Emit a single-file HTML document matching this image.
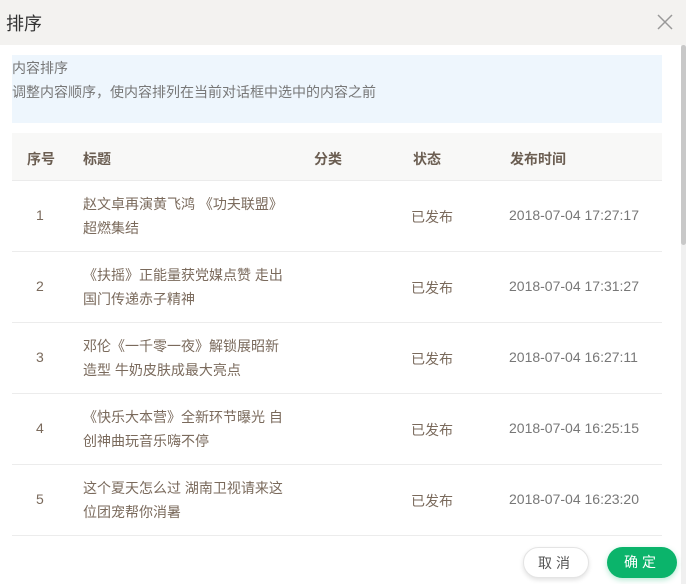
<!DOCTYPE html><html><head><meta charset="utf-8"><style>
*{margin:0;padding:0;box-sizing:border-box}
body{width:686px;height:584px;background:#fff;font-family:"Liberation Sans","Noto Sans CJK SC",sans-serif;color:#666;position:relative;overflow:hidden}
.hd{position:absolute;left:0;top:0;width:686px;height:45px;background:#f3f2f0}
.hd .t{position:absolute;left:6px;top:10px;font-size:18px;color:#333}
.x{position:absolute;left:657px;top:14px}
.sb{position:absolute;left:681px;top:45px;width:5px;height:539px;background:#f0f0f0}
.sb i{position:absolute;left:0;top:0;width:5px;height:200px;background:#c8c8c8;border-radius:3px}
.info{position:absolute;left:12px;top:55px;width:650px;height:68px;background:#eef6fd;font-size:14px;color:#777;padding:0}
.info div{line-height:24px}
.th{position:absolute;left:12px;top:133px;width:650px;height:48px;background:#f8f8f7;border-bottom:1px solid #ebebeb;font-size:14px;font-weight:bold;color:#6b5e52}
.c{position:absolute;}
.row{position:absolute;left:12px;width:650px;height:71px;border-bottom:1px solid #ececec;font-size:14px;color:#7a6a5c}
.row .n{position:absolute;left:24px;top:26px}
.row .tt{position:absolute;left:71px;top:11px;width:260px;line-height:24px;white-space:nowrap}
.row .s{position:absolute;left:399px;top:26px}
.row .d{position:absolute;left:497px;top:26px;color:#777}
.btn{position:absolute;top:547px;height:31px;border-radius:16px;font-size:14px;text-align:center;line-height:31px;letter-spacing:4px}
</style></head><body>
<div class="hd"><div class="t">排序</div>
<svg class="x" width="16" height="16" viewBox="0 0 16 16"><path d="M1 1L15 15M15 1L1 15" stroke="#999" stroke-width="1.5"/></svg></div>
<div class="sb"><i></i></div>
<div class="info"><div style="margin-top:1px">内容排序</div><div>调整内容顺序，使内容排列在当前对话框中选中的内容之前</div></div>
<div class="th"><span class="c" style="left:15px;top:16px">序号</span><span class="c" style="left:71px;top:16px">标题</span><span class="c" style="left:302px;top:16px">分类</span><span class="c" style="left:401px;top:16px">状态</span><span class="c" style="left:498px;top:16px">发布时间</span></div>
<div class="row" style="top:181px"><span class="n">1</span><div class="tt">赵文卓再演黄飞鸿 《功夫联盟》<br>超燃集结</div><span class="s">已发布</span><span class="d">2018-07-04 17:27:17</span></div>
<div class="row" style="top:252px"><span class="n">2</span><div class="tt">《扶摇》正能量获党媒点赞 走出<br>国门传递赤子精神</div><span class="s">已发布</span><span class="d">2018-07-04 17:31:27</span></div>
<div class="row" style="top:323px"><span class="n">3</span><div class="tt">邓伦《一千零一夜》解锁展昭新<br>造型 牛奶皮肤成最大亮点</div><span class="s">已发布</span><span class="d">2018-07-04 16:27:11</span></div>
<div class="row" style="top:394px"><span class="n">4</span><div class="tt">《快乐大本营》全新环节曝光 自<br>创神曲玩音乐嗨不停</div><span class="s">已发布</span><span class="d">2018-07-04 16:25:15</span></div>
<div class="row" style="top:465px"><span class="n">5</span><div class="tt">这个夏天怎么过 湖南卫视请来这<br>位团宠帮你消暑</div><span class="s">已发布</span><span class="d">2018-07-04 16:23:20</span></div>
<div class="btn" style="left:523px;width:66px;background:#fff;border:1px solid #e4e4e4;color:#555;box-shadow:0 2px 5px rgba(0,0,0,.12)">取消</div>
<div class="btn" style="left:607px;width:70px;background:#0bb46b;color:#fff;box-shadow:0 2px 6px rgba(11,180,107,.3)">确定</div>
</body></html>
